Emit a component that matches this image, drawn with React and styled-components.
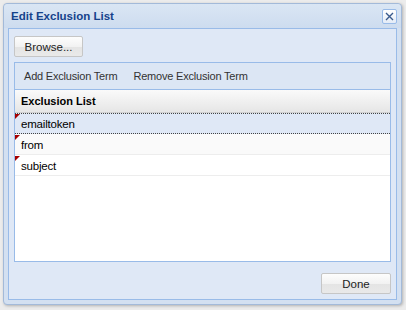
import React from 'react';
import styled, { createGlobalStyle } from 'styled-components';

const GlobalStyle = createGlobalStyle`
  html, body {
    margin: 0;
    padding: 0;
    background: #e9e9e9;
  }
  body {
    font-family: "Liberation Sans", Arial, sans-serif;
    font-size: 11px;
    color: #000;
  }
`;

const Desktop = styled.div`
  width: 406px;
  height: 310px;
  padding: 3px;
  box-sizing: border-box;
  background: #ececec;
  overflow: hidden;
`;

const Window = styled.div`
  width: 399px;
  height: 302px;
  box-sizing: border-box;
  border: 1px solid #a3bad9;
  border-radius: 4px;
  background: #d3e0f1;
  display: flex;
  flex-direction: column;
  box-shadow: 1px 1px 3px rgba(0, 0, 0, 0.25);
`;

const TitleBar = styled.div`
  height: 24px;
  flex: none;
  display: flex;
  align-items: center;
  justify-content: space-between;
  padding: 0 4px 0 7px;
  background: linear-gradient(#dae6f4, #cddcef);
  border-radius: 4px 4px 0 0;
`;

const Title = styled.span`
  color: #15428b;
  font-weight: 700;
  font-size: 11.5px;
`;

const CloseButton = styled.button`
  width: 15px;
  height: 15px;
  padding: 0;
  border: 1px solid #99bbe8;
  border-radius: 2px;
  background: linear-gradient(#ffffff, #e4ecf7);
  display: flex;
  align-items: center;
  justify-content: center;
`;

const Body = styled.div`
  flex: 1;
  margin: 0 4px 4px;
  border: 1px solid #99bbe8;
  background: #dfe8f6;
  display: flex;
  flex-direction: column;
  padding: 7px 5px 5px;
`;

const Button = styled.button`
  width: ${p => p.w}px;
  height: 21px;
  padding: 0;
  box-sizing: border-box;
  border: 1px solid #c6c6c6;
  border-radius: 2px;
  background: linear-gradient(#fdfdfd 0%, #f2f2f2 50%, #e4e4e4 51%, #e9e9e9 100%);
  font-family: "Liberation Sans", Arial, sans-serif;
  font-size: 11.5px;
  color: #222;
  flex: none;
`;

const GridPanel = styled.div`
  margin-top: 5px;
  height: 200px;
  box-sizing: border-box;
  border: 1px solid #99bbe8;
  background: #fff;
  display: flex;
  flex-direction: column;
`;

const Toolbar = styled.div`
  height: 26px;
  flex: none;
  display: flex;
  align-items: center;
  gap: 16px;
  padding: 0 9px;
  background: #dce6f4;
  border-bottom: 1px solid #99bbe8;
  color: #333;
  font-size: 11px;
  letter-spacing: -0.2px;
`;

const Header = styled.div`
  height: 22px;
  flex: none;
  display: flex;
  align-items: center;
  padding: 0 6px;
  font-weight: 700;
  background: linear-gradient(#fafafa, #e6e6e6);
  border-bottom: 1px solid #d0d0d0;
`;

const Row = styled.div`
  position: relative;
  height: 21px;
  box-sizing: border-box;
  display: flex;
  align-items: center;
  padding: 0 6px;
  font-size: 11.5px;
  letter-spacing: -0.2px;
  background: ${p => (p.selected ? '#dfe8f6' : p.alt ? '#fafafa' : '#fff')};
  border-top: 1px ${p => (p.selected ? 'dotted #444' : 'solid transparent')};
  border-bottom: 1px ${p => (p.selected ? 'dotted #444' : 'solid #ededed')};
`;

const DirtyFlag = styled.span`
  position: absolute;
  left: 0;
  top: 0;
  width: 0;
  height: 0;
  border-top: 5px solid #a60000;
  border-right: 5px solid transparent;
`;

const Footer = styled.div`
  margin-top: auto;
  display: flex;
  justify-content: flex-end;
`;

const terms = ['emailtoken', 'from', 'subject'];

export default function App() {
  return (
    <>
      <GlobalStyle />
      <Desktop>
        <Window>
          <TitleBar>
            <Title>Edit Exclusion List</Title>
            <CloseButton aria-label="close">
              <svg width="9" height="9" viewBox="0 0 9 9">
                <path d="M1 1 L8 8 M8 1 L1 8" stroke="#3a5a8c" strokeWidth="1.4" />
              </svg>
            </CloseButton>
          </TitleBar>
          <Body>
            <Button w={69}>Browse...</Button>
            <GridPanel>
              <Toolbar>
                <span>Add Exclusion Term</span>
                <span>Remove Exclusion Term</span>
              </Toolbar>
              <Header>Exclusion List</Header>
              {terms.map((t, i) => (
                <Row key={t} selected={i === 0} alt={i === 1}>
                  <DirtyFlag />
                  {t}
                </Row>
              ))}
            </GridPanel>
            <Footer>
              <Button w={70}>Done</Button>
            </Footer>
          </Body>
        </Window>
      </Desktop>
    </>
  );
}
